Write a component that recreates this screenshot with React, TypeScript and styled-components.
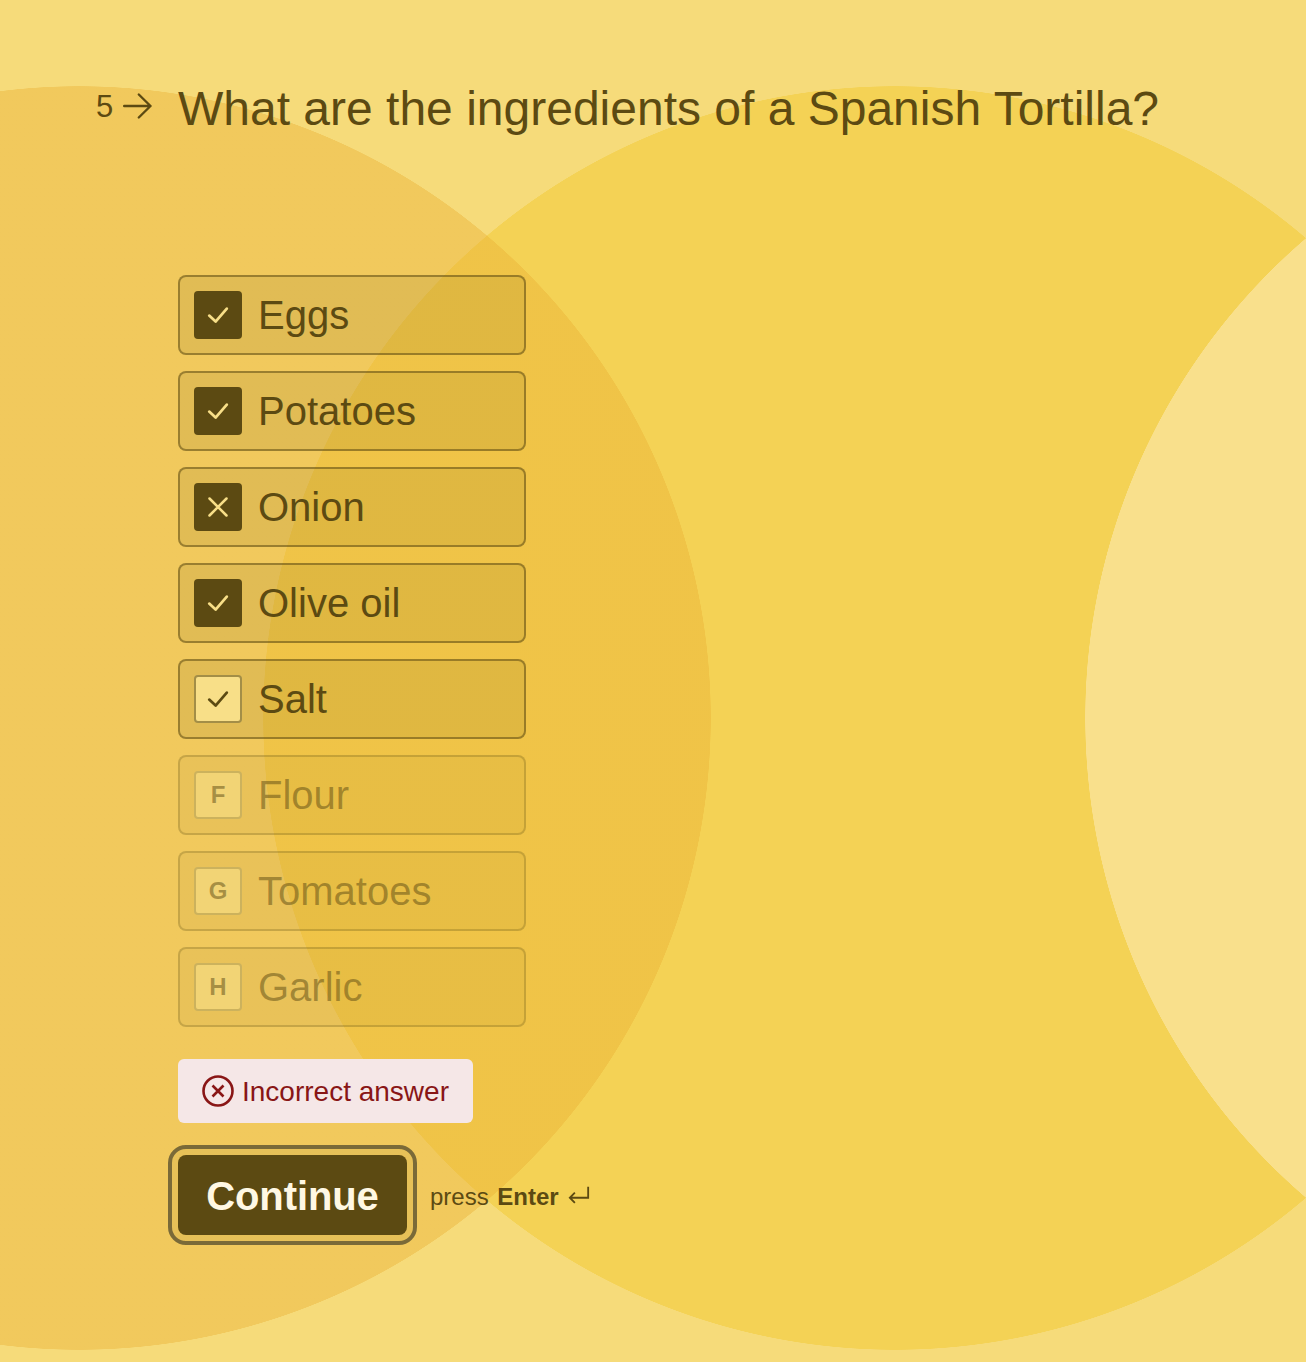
import React from "react";
import styled, { createGlobalStyle } from "styled-components";

const GlobalStyle = createGlobalStyle`
  html, body {
    margin: 0;
    padding: 0;
  }
  body {
    font-family: "Liberation Sans", Arial, sans-serif;
    color: #5c4a12;
  }
`;

const Page = styled.main`
  box-sizing: border-box;
  height: 1362px;
  overflow: hidden;
  padding: 80px 0 0 96px;
  background-color: #f6db7a;
  background-image:
    radial-gradient(circle 632px at 1717px 718px, #f9e08c 631.5px, transparent 632px),
    radial-gradient(circle 632px at 79px 718px, rgba(234, 176, 52, 0.42) 631.5px, transparent 632px),
    radial-gradient(circle 632px at 895px 718px, #f4d255 631.5px, transparent 632px);
`;

const QuestionRow = styled.header`
  display: flex;
  align-items: flex-start;
  height: 56px;
`;

const Counter = styled.div`
  display: flex;
  align-items: center;
  width: 82px;
  height: 52px;
  padding-top: 1px;
  box-sizing: border-box;
  font-size: 31px;
  gap: 10px;
  svg {
    width: 30px;
    height: 30px;
    flex: none;
    margin-top: -1px;
  }
`;

const Question = styled.h1`
  margin: 0;
  padding-top: 1px;
  font-size: 48px;
  line-height: 56px;
  font-weight: 400;
  white-space: nowrap;
`;

const Content = styled.section`
  margin: 139px 0 0 82px;
`;

const OptionList = styled.div`
  display: flex;
  flex-direction: column;
  gap: 16px;
  width: 348px;
`;

const Option = styled.div<{ $muted?: boolean }>`
  box-sizing: border-box;
  display: flex;
  align-items: center;
  gap: 16px;
  height: 80px;
  padding: 0 14px;
  border-radius: 8px;
  border: 2px solid rgba(92, 74, 18, ${(p) => (p.$muted ? 0.25 : 0.55)});
  background: rgba(92, 74, 18, ${(p) => (p.$muted ? 0.05 : 0.1)});
  font-size: 40px;
  color: rgba(92, 74, 18, ${(p) => (p.$muted ? 0.5 : 1)});
`;

const Key = styled.div<{ $variant: "filled" | "outline" | "muted" }>`
  box-sizing: border-box;
  display: flex;
  align-items: center;
  justify-content: center;
  flex: none;
  width: 48px;
  height: 48px;
  border-radius: 4px;
  font-size: 24px;
  font-weight: 700;
  background: ${(p) => (p.$variant === "filled" ? "#5c4a12" : "#f8df88")};
  color: ${(p) => (p.$variant === "filled" ? "#f8df88" : "#5c4a12")};
  border: ${(p) =>
    p.$variant === "filled"
      ? "none"
      : p.$variant === "outline"
      ? "2px solid rgba(92, 74, 18, 0.55)"
      : "2px solid rgba(92, 74, 18, 0.25)"};
  ${(p) => (p.$variant === "muted" ? "background: rgba(248, 223, 136, 0.6); color: rgba(92, 74, 18, 0.5);" : "")}
  svg {
    width: 24px;
    height: 24px;
  }
`;

const Alert = styled.div`
  display: inline-flex;
  align-items: center;
  gap: 8px;
  height: 64px;
  margin-top: 32px;
  padding: 0 24px;
  border-radius: 6px;
  background: #f5e7e7;
  color: #891616;
  font-size: 28px;
  span {
    padding-top: 1px;
  }
  svg {
    width: 32px;
    height: 32px;
  }
`;

const Actions = styled.div`
  display: flex;
  align-items: center;
  margin-top: 32px;
  gap: 23px;
`;

const ContinueButton = styled.button`
  box-sizing: border-box;
  width: 229px;
  height: 80px;
  padding: 2px 0 0;
  border: none;
  border-radius: 8px;
  background: #5c4a12;
  color: #fff8e4;
  font-family: inherit;
  font-size: 40px;
  font-weight: 700;
  letter-spacing: -0.1px;
  box-shadow: 0 0 0 6px rgba(92, 74, 18, 0.06);
  outline: 4px solid #7a6a38;
  outline-offset: 6px;
`;

const Hint = styled.div`
  display: flex;
  align-items: center;
  gap: 9px;
  padding-top: 4px;
  font-size: 24px;
  word-spacing: 2px;
  b {
    font-weight: 700;
  }
  svg {
    width: 22px;
    height: 22px;
    margin-top: -4px;
  }
`;

const Check = () => (
  <svg viewBox="0 0 24 24" fill="none" stroke="currentColor" strokeWidth="2.7" strokeLinecap="round" strokeLinejoin="round">
    <path d="M3.2 12.6 L9.6 18.6 L20.8 5.6" />
  </svg>
);

const Cross = () => (
  <svg viewBox="0 0 24 24" fill="none" stroke="currentColor" strokeWidth="2.5" strokeLinecap="round">
    <path d="M3.5 3.5 L20.5 20.5 M20.5 3.5 L3.5 20.5" />
  </svg>
);

type Item = {
  label: string;
  mark: "check" | "cross" | "letter";
  variant: "filled" | "outline" | "muted";
  letter?: string;
};

const items: Item[] = [
  { label: "Eggs", mark: "check", variant: "filled" },
  { label: "Potatoes", mark: "check", variant: "filled" },
  { label: "Onion", mark: "cross", variant: "filled" },
  { label: "Olive oil", mark: "check", variant: "filled" },
  { label: "Salt", mark: "check", variant: "outline" },
  { label: "Flour", mark: "letter", variant: "muted", letter: "F" },
  { label: "Tomatoes", mark: "letter", variant: "muted", letter: "G" },
  { label: "Garlic", mark: "letter", variant: "muted", letter: "H" },
];

export default function App() {
  return (
    <Page>
      <GlobalStyle />
      <QuestionRow>
        <Counter>
          5
          <svg viewBox="0 0 30 30" fill="none" stroke="currentColor" strokeWidth="2.4" strokeLinecap="round" strokeLinejoin="round">
            <path d="M1.2 15 H27.5 M15.8 3.5 L27.5 15 L15.8 26.5" />
          </svg>
        </Counter>
        <Question>What are the ingredients of a Spanish Tortilla?</Question>
      </QuestionRow>
      <Content>
        <OptionList>
          {items.map((item) => (
            <Option key={item.label} $muted={item.variant === "muted"}>
              <Key $variant={item.variant}>
                {item.mark === "check" && <Check />}
                {item.mark === "cross" && <Cross />}
                {item.mark === "letter" && item.letter}
              </Key>
              {item.label}
            </Option>
          ))}
        </OptionList>
        <Alert>
          <svg viewBox="0 0 32 32" fill="none" stroke="currentColor" strokeWidth="2.6">
            <circle cx="16" cy="16" r="14.5" />
            <path d="M10.5 10.5 L21.5 21.5 M21.5 10.5 L10.5 21.5" />
          </svg>
          <span>Incorrect answer</span>
        </Alert>
        <Actions>
          <ContinueButton>Continue</ContinueButton>
          <Hint>
            <span>
              press <b>Enter</b>
            </span>
            <svg viewBox="0 0 24 24" fill="none" stroke="currentColor" strokeWidth="2">
              <path d="M22 3 V15 H2 M7.5 9.5 L2 15 L7.5 20.5" />
            </svg>
          </Hint>
        </Actions>
      </Content>
    </Page>
  );
}
